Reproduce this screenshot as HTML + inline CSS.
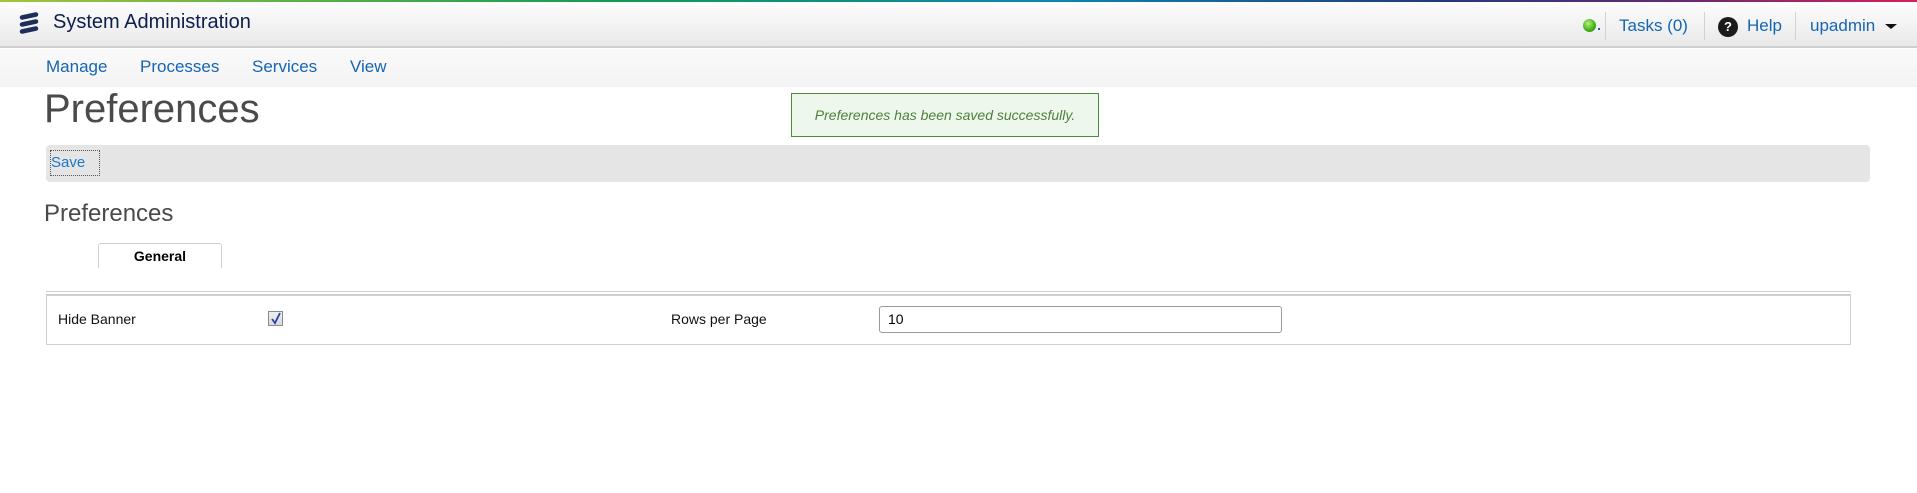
<!DOCTYPE html>
<html><head><meta charset="utf-8"><style>
*{margin:0;padding:0;box-sizing:border-box}
body{width:1917px;height:493px;background:#fff;font-family:"Liberation Sans",Arial,sans-serif;position:relative;overflow:hidden}
.a{position:absolute;white-space:nowrap}
#bar{left:0;top:0;width:1917px;height:2px;background:linear-gradient(90deg,#a3c43b 0%,#0e9a55 33%,#0a86b4 55%,#23387e 75%,#6a2a72 88%,#d8205a 100%)}
#hdr{left:0;top:2px;width:1917px;height:46px;background:linear-gradient(#fdfdfd,#e9e9e9);border-bottom:2px solid #cfcfcf}
#nav{left:0;top:49px;width:1917px;height:38px;background:linear-gradient(#fafafa,#f3f3f3)}
.nl{top:57px;font-size:17px;color:#1565b3}
.sep{top:12px;width:1px;height:28px;background:#d2d2d2}
.hl{font-size:17px;color:#1565b3;top:16px}
</style></head><body>
<div class="a" id="bar"></div>
<div class="a" id="hdr"></div>
<svg class="a" style="left:19px;top:12px" width="20" height="24" viewBox="0 0 20 24">
<g stroke="#1d2d5c" stroke-width="4.5" stroke-linecap="round" fill="none">
<line x1="3" y1="5.5" x2="17" y2="2.5"/><line x1="3" y1="12.5" x2="17" y2="9.5"/><line x1="3" y1="19.5" x2="17" y2="16.5"/></g></svg>
<div class="a" style="left:53px;top:11px;font-size:20px;color:#0c1f4c">System Administration</div>

<div class="a" style="left:1583px;top:19px;width:13px;height:13px;border-radius:50%;background:radial-gradient(circle at 40% 35%,#b6f07a,#3fae1a 60%,#2a7d10)"></div>
<div class="a" style="left:1598px;top:28px;width:2px;height:2px;background:#1565b3"></div>
<div class="a sep" style="left:1605px"></div>
<div class="a hl" style="left:1619px">Tasks (0)</div>
<div class="a sep" style="left:1704px"></div>
<div class="a" style="left:1718px;top:17px;width:20px;height:20px;border-radius:50%;background:#1c1c1c;color:#fff;font-size:13px;font-weight:bold;text-align:center;line-height:20px">?</div>
<div class="a hl" style="left:1747px">Help</div>
<div class="a sep" style="left:1795px"></div>
<div class="a hl" style="left:1810px">upadmin</div>
<div class="a" style="left:1885px;top:24px;width:0;height:0;border-left:6px solid transparent;border-right:6px solid transparent;border-top:5px solid #111"></div>

<div class="a" id="nav"></div>
<div class="a nl" style="left:46px">Manage</div>
<div class="a nl" style="left:140px">Processes</div>
<div class="a nl" style="left:252px">Services</div>
<div class="a nl" style="left:350px">View</div>

<div class="a" style="left:44px;top:87px;font-size:40px;color:#4a4a4a">Preferences</div>
<div class="a" style="left:791px;top:93px;width:308px;height:44px;background:#eef7eb;border:1px solid #4b8b3b;color:#4e7f3c;font-style:italic;font-size:14px;line-height:42px;text-align:center">Preferences has been saved successfully.</div>

<div class="a" style="left:46px;top:145px;width:1824px;height:37px;background:#e5e5e5;border-radius:4px"></div>
<div class="a" style="left:50px;top:150px;width:50px;height:26px;border:1px dotted #555;font-size:15px;color:#1a7ac8;line-height:24px">Save</div>

<div class="a" style="left:44px;top:200px;font-size:24px;color:#4a4a4a">Preferences</div>

<div class="a" style="left:98px;top:243px;width:124px;height:25px;border:1px solid #cfcfcf;border-bottom:none;border-radius:3px 3px 0 0;background:#fff;font-size:14px;font-weight:bold;text-align:center;line-height:24px;color:#000">General</div>

<div class="a" style="left:46px;top:291px;width:1805px;height:1px;background:#cfcfcf"></div>
<div class="a" style="left:46px;top:294px;width:1805px;height:51px;border:1px solid #cfcfcf;border-top:2px solid #cfcfcf"></div>
<div class="a" style="left:58px;top:311px;font-size:14px;color:#111">Hide Banner</div>
<div class="a" style="left:268px;top:311px;width:15px;height:15px;border:1px solid #8a8a8a;background:linear-gradient(#eef0f4,#d6dae2)"></div>
<svg class="a" style="left:270px;top:312px" width="12" height="13" viewBox="0 0 12 13"><path d="M2 7 L5 11 L10 1" stroke="#2c44a0" stroke-width="1.8" fill="none"/></svg>
<div class="a" style="left:671px;top:311px;font-size:14px;color:#111">Rows per Page</div>
<div class="a" style="left:879px;top:306px;width:403px;height:27px;border:1px solid #9a9a9a;border-radius:3px;background:#fff;font-size:14px;line-height:25px;padding-left:8px;color:#000">10</div>
</body></html>
